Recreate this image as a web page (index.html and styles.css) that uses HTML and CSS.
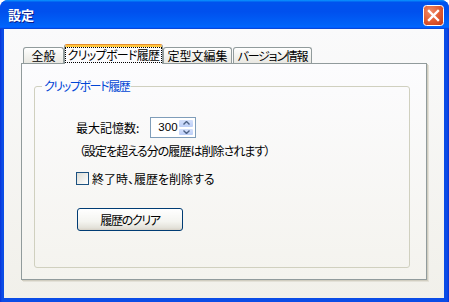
FILE: index.html
```html
<!DOCTYPE html>
<html lang="ja">
<head>
<meta charset="utf-8">
<title>設定</title>
<link rel="stylesheet" href="styles.css">
</head>
<body>
<div class="window">
  <div class="titlebar">
    <span class="title">設定</span>
    <button class="close" aria-label="閉じる">
      <svg width="21" height="21" viewBox="0 0 21 21">
        <defs>
          <radialGradient id="cg" cx="0.35" cy="0.3" r="0.9">
            <stop offset="0" stop-color="#f08b68"/>
            <stop offset="0.55" stop-color="#e05a31"/>
            <stop offset="1" stop-color="#c2381a"/>
          </radialGradient>
        </defs>
        <rect x="0.5" y="0.5" width="20" height="20" rx="3" fill="url(#cg)" stroke="#ffffff"/>
        <path d="M6 6 L15 15 M15 6 L6 15" stroke="#ffffff" stroke-width="2.4" stroke-linecap="square"/>
      </svg>
    </button>
  </div>
  <div class="client">
    <div class="tabs">
      <div class="tab tab-general">全般</div>
      <div class="tab tab-clip active"><span class="focus">クリップボード履歴</span></div>
      <div class="tab tab-fixed">定型文編集</div>
      <div class="tab tab-version">バージョン情報</div>
    </div>
    <div class="panel">
      <fieldset class="group">
        <legend>クリップボード履歴</legend>
        <div class="limit">
          <span class="limit-label">最大記憶数:</span>
          <div class="spin">
            <span class="val">300</span>
            <div class="arrows">
              <span class="arrow">
                <svg width="7" height="4" viewBox="0 0 7 4"><path d="M0.5 3.5 L3.5 0.5 L6.5 3.5" fill="none" stroke="#4d6185" stroke-width="1.4"/></svg>
              </span>
              <span class="arrow">
                <svg width="7" height="4" viewBox="0 0 7 4"><path d="M0.5 0.5 L3.5 3.5 L6.5 0.5" fill="none" stroke="#4d6185" stroke-width="1.4"/></svg>
              </span>
            </div>
          </div>
        </div>
        <div class="note">（設定を超える分の履歴は削除されます）</div>
        <label class="check"><span class="box"></span>終了時、履歴を削除する</label>
        <button class="btn">履歴のクリア</button>
      </fieldset>
    </div>
  </div>
</div>
</body>
</html>
```
FILE: styles.css
```css
* { box-sizing: border-box; }
html, body { margin: 0; padding: 0; background: #ffffff; }
body {
  font-family: "Noto Sans CJK JP", "Noto Sans", sans-serif;
  font-size: 12px;
  font-feature-settings: "palt";
  color: #000;
}

.window {
  width: 449px;
  height: 302px;
  background: linear-gradient(90deg, #0831d9 0, #0b4ce6 2px, #0b4ce6 calc(100% - 2px), #0831d9 100%);
  border-radius: 8px 8px 0 0;
  display: flex;
  flex-direction: column;
  overflow: hidden;
}

.titlebar {
  height: 29px;
  flex: none;
  display: flex;
  align-items: center;
  justify-content: space-between;
  padding: 0 5px 0 8px;
  background: linear-gradient(180deg, #0997ff, #0053ee 8%, #0050ee 40%, #0062f8 85%, #0066ff 93%, #005bff 95%, #0848d8 97%, #0848d8);
}
.title {
  color: #fff;
  font-weight: bold;
  font-size: 13px;
  line-height: 16px;
  text-shadow: 1px 1px 0 #0a1a8a;
  font-feature-settings: normal;
}
.close {
  align-self: flex-start;
  margin-top: 5px;
  width: 21px;
  height: 21px;
  padding: 0;
  border: 0;
  background: none;
  display: block;
}
.close svg { display: block; }

.client {
  flex: 1;
  margin: 0 5px 4px 4px;
  padding: 15px 0 0 17px;
  background: linear-gradient(180deg, #fafafb, #f1f0ea);
}

.tabs {
  display: flex;
  align-items: flex-end;
  height: 20px;
  padding-left: 2px;
}
.tab {
  height: 16px;
  margin-bottom: 1px;
  padding: 0;
  border: 1px solid #919b9c;
  border-bottom: 0;
  border-radius: 3px 3px 0 0;
  background: linear-gradient(180deg, #ffffff, #f3f3ef 50%, #e9e8e2);
  line-height: 15px;
  text-align: center;
  white-space: nowrap;
}
.tab-general { width: 41px; }
.tab-clip { width: 99px; }
.tab-fixed { width: 69px; }
.tab-version { width: 79px; margin-left: 1px; letter-spacing: -1.2px; }

.tab.active {
  position: relative;
  z-index: 1;
  height: 20px;
  margin-bottom: 0;
  padding: 3px 0 0;
  border-top: 1px solid #e68b2c;
  background: #fcfcfe;
  box-shadow: inset 0 2px 0 #ffc73c;
  line-height: 14px;
}
.focus {
  display: block;
  margin: 0 1px;
  outline: 1px dotted #000;
  outline-offset: 0;
  line-height: 14px;
  letter-spacing: -0.7px;
}

.panel {
  margin-top: -1px;
  width: 406px;
  height: 217px;
  border: 1px solid #919b9c;
  background: linear-gradient(180deg, #fcfcfe, #f4f3ee);
  box-shadow: 1px 1px 0 #d0cdc0, 2px 2px 0 #e3e1d8;
  padding: 15px 16px 11px 12px;
  display: flex;
  flex-direction: column;
}

.group {
  flex: 1;
  margin: 0;
  min-width: 0;
  border: 1px solid #d0d0bf;
  border-radius: 3px;
  padding: 24px 0 0 41px;
  display: flex;
  flex-direction: column;
  align-items: flex-start;
}
.group legend {
  margin-left: -34px;
  padding: 0 2px;
  color: #0046d5;
  line-height: 14px;
  letter-spacing: -1.4px;
}

.limit {
  display: flex;
  align-items: center;
  height: 21px;
}
.spin {
  margin-left: 11px;
  width: 46px;
  height: 21px;
  border: 1px solid #7f9db9;
  background: #fff;
  display: flex;
}
.val {
  flex: 1;
  padding-left: 7px;
  font-family: "Liberation Sans", Arial, sans-serif;
  font-size: 11.5px;
  line-height: 19px;
}
.arrows {
  width: 16px;
  margin: 1px 1px 1px 0;
  display: flex;
  flex-direction: column;
}
.arrow {
  flex: 1;
  display: flex;
  align-items: center;
  justify-content: center;
  border: 1px solid #fff;
  border-radius: 2px;
  background: linear-gradient(180deg, #d5e1fc, #bccef7);
}
.arrow svg { display: block; }

.note {
  margin-top: 6px;
  margin-left: 3px;
  line-height: 13px;
  letter-spacing: -0.95px;
}

.check {
  margin-top: 15px;
  display: flex;
  align-items: center;
  line-height: 13px;
}
.box {
  width: 13px;
  height: 13px;
  margin-right: 3px;
  border: 1px solid #1c5180;
  background: linear-gradient(135deg, #dcdcd5, #ffffff);
}

.btn {
  margin: 23px 0 0 1px;
  width: 106px;
  height: 23px;
  padding: 0;
  border: 1px solid #003c74;
  border-radius: 3px;
  background: linear-gradient(180deg, #ffffff, #f4f4f0 60%, #e3e1d9 90%, #d6d0c5);
  font: inherit;
  font-feature-settings: "palt";
  letter-spacing: -1.3px;
  color: #000;
  line-height: 21px;
}
```
